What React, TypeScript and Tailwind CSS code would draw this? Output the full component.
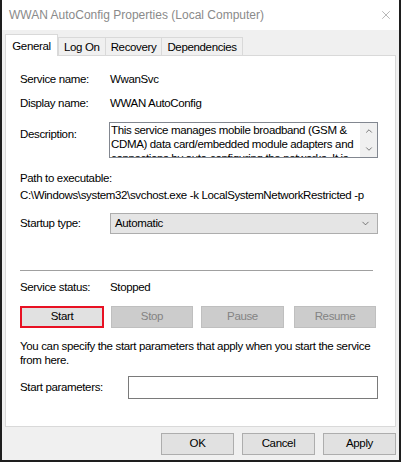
import { ChevronDown, ChevronUp, X } from "lucide-react";

const font = { fontFamily: '"Liberation Sans", Arial, sans-serif' };

function Tab({ label, active = false }: { label: string; active?: boolean }) {
  if (active) {
    return (
      <div className="relative z-10 -mb-px flex h-[22px] w-[53px] items-start justify-center border border-b-0 border-[#d9d9d9] bg-white pt-[3px] text-black">
        {label}
      </div>
    );
  }
  return (
    <div className="-ml-px flex h-[18px] items-start border border-b-0 border-[#d9d9d9] bg-[#f0f0f0] px-[5px] pt-[1px] text-black first:ml-0">
      {label}
    </div>
  );
}

function Btn({
  label,
  disabled = false,
  focused = false,
  className = "",
}: {
  label: string;
  disabled?: boolean;
  focused?: boolean;
  className?: string;
}) {
  const tone = focused
    ? "border-2 border-[#e81123] bg-[#e1e1e1] text-black"
    : disabled
      ? "border border-[#bfbfbf] bg-[#cccccc] text-[#838383]"
      : "border border-[#adadad] bg-[#e1e1e1] text-black";
  return (
    <div className={`flex h-[22px] items-center justify-center ${tone} ${className}`}>
      {label}
    </div>
  );
}

export default function App() {
  return (
    <div
      style={font}
      className="flex h-[462px] w-[401px] flex-col border-x-2 border-b-2 border-[#1e1e1e] bg-[#f0f0f0] text-[11.5px] tracking-[-0.35px] text-black"
    >
      {/* title bar */}
      <div className="flex h-[30px] items-center justify-between bg-white pl-[7px] pr-[6px]">
        <span className="text-[12px] tracking-normal text-[#8a8a8a]">WWAN AutoConfig Properties (Local Computer)</span>
        <X className="h-[14px] w-[14px] text-[#9a9a9a]" strokeWidth={1.2} />
      </div>

      <div className="flex flex-1 flex-col px-[3px] pt-[4px]">
        {/* tabs */}
        <div className="flex items-end">
          <Tab label="General" active />
          <div className="flex">
            <Tab label="Log On" />
            <Tab label="Recovery" />
            <Tab label="Dependencies" />
          </div>
        </div>

        {/* panel */}
        <div className="h-[372px] border border-[#d9d9d9] bg-white pl-[14px] pr-[17px]">
          <div className="mt-[14px] flex h-[20px] items-center">
            <span className="w-[90px]">Service name:</span>
            <span>WwanSvc</span>
          </div>
          <div className="mt-[4px] flex h-[20px] items-center">
            <span className="w-[90px]">Display name:</span>
            <span>WWAN AutoConfig</span>
          </div>

          <div className="mt-[8px] flex">
            <span className="w-[89px] pt-[4px]">Description:</span>
            <div className="flex h-[36px] flex-1 border border-[#828790] bg-white">
              <div className="h-full flex-1 overflow-hidden pl-[1px] leading-[14px]">
                This service manages mobile broadband (GSM &amp; CDMA) data card/embedded module adapters and
                connections by auto-configuring the networks. It is
              </div>
              <div className="flex w-[17px] flex-col items-center justify-between bg-[#f0f0f0] py-[3px]">
                <ChevronUp className="h-[10px] w-[10px] text-[#606060]" strokeWidth={2} />
                <ChevronDown className="h-[10px] w-[10px] text-[#606060]" strokeWidth={2} />
              </div>
            </div>
          </div>

          <div className="mt-[12px] h-[16px] leading-[16px]">Path to executable:</div>
          <div className="mt-[1px] h-[16px] whitespace-nowrap leading-[16px]">
            C:\Windows\system32\svchost.exe -k LocalSystemNetworkRestricted -p
          </div>

          <div className="mt-[10px] flex items-center">
            <span className="w-[90px]">Startup type:</span>
            <div className="flex h-[21px] flex-1 items-center justify-between border border-[#adadad] bg-[#e5e5e5] pl-[4px] pr-[6px]">
              <span>Automatic</span>
              <ChevronDown className="h-[11px] w-[11px] text-[#444]" strokeWidth={1.5} />
            </div>
          </div>

          <div className="mt-[36px] h-px w-[353px] bg-[#a0a0a0]" />

          <div className="mt-[9px] flex h-[16px] items-center">
            <span className="w-[90px]">Service status:</span>
            <span>Stopped</span>
          </div>

          <div className="mt-[10px] flex">
            <Btn label="Start" focused className="w-[84px]" />
            <Btn label="Stop" disabled className="ml-[7px] w-[82px]" />
            <Btn label="Pause" disabled className="ml-[8px] w-[83px]" />
            <Btn label="Resume" disabled className="ml-[10px] w-[82px]" />
          </div>

          <p className="mt-[11px] pr-[4px] leading-[14px]">
            You can specify the start parameters that apply when you start the service from here.
          </p>

          <div className="mt-[9px] flex items-center">
            <span className="w-[108px]">Start parameters:</span>
            <div className="h-[23px] flex-1 border border-[#7a7a7a] bg-white" />
          </div>
        </div>

        {/* dialog buttons */}
        <div className="mt-[6px] flex justify-end gap-[8px]">
          <Btn label="OK" className="w-[73px]" />
          <Btn label="Cancel" className="w-[73px]" />
          <Btn label="Apply" className="w-[73px]" />
        </div>
      </div>
    </div>
  );
}
